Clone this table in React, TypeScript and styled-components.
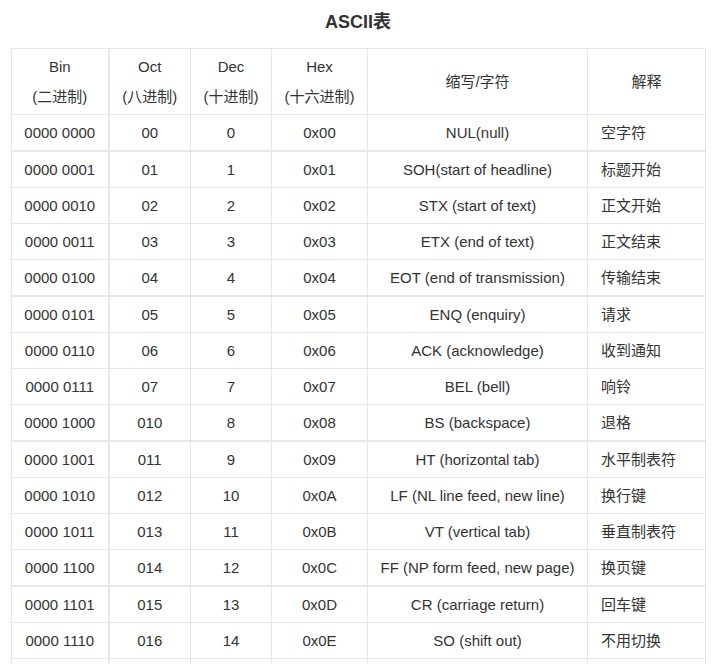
import React from "react";
import styled, { createGlobalStyle } from "styled-components";

const Global = createGlobalStyle`
  html, body { margin: 0; padding: 0; background: #fff; }
  body {
    font-family: "Liberation Sans", Arial, "Noto Sans CJK SC", sans-serif;
    color: #333;
  }
`;

const Page = styled.div`
  padding: 0 15px 0 11px;
`;

const Title = styled.h3`
  margin: 8px 0 12px;
  font-size: 18px;
  line-height: 28px;
  font-weight: bold;
  text-align: center;
  color: #333;
  font-family: "Liberation Sans", Arial, "Noto Sans CJK SC", sans-serif;
`;

const Table = styled.table`
  width: 694px;
  border-collapse: collapse;
  table-layout: fixed;
  font-size: 15px;
  line-height: 30px;
  color: #333;
`;

const Th = styled.th<{ $first?: boolean }>`
  font-weight: normal;
  text-align: center;
  padding: 2.6px 4px;
  border: 1px solid #e6e6e6;
  border-right-width: ${(p) => (p.$first ? "2px" : "1px")};
`;

const Td = styled.td<{ $left?: boolean; $first?: boolean; $thick?: boolean }>`
  text-align: ${(p) => (p.$left ? "left" : "center")};
  padding: 2.5px ${(p) => (p.$left ? "13px" : "4px")};
  border: 1px solid #e6e6e6;
  border-right-width: ${(p) => (p.$first ? "2px" : "1px")};
  border-bottom-width: ${(p) => (p.$thick ? "2px" : "1px")};
  white-space: nowrap;
`;

const rows: [string, string, string, string, string, string][] = [
  ["0000 0000", "00", "0", "0x00", "NUL(null)", "空字符"],
  ["0000 0001", "01", "1", "0x01", "SOH(start of headline)", "标题开始"],
  ["0000 0010", "02", "2", "0x02", "STX (start of text)", "正文开始"],
  ["0000 0011", "03", "3", "0x03", "ETX (end of text)", "正文结束"],
  ["0000 0100", "04", "4", "0x04", "EOT (end of transmission)", "传输结束"],
  ["0000 0101", "05", "5", "0x05", "ENQ (enquiry)", "请求"],
  ["0000 0110", "06", "6", "0x06", "ACK (acknowledge)", "收到通知"],
  ["0000 0111", "07", "7", "0x07", "BEL (bell)", "响铃"],
  ["0000 1000", "010", "8", "0x08", "BS (backspace)", "退格"],
  ["0000 1001", "011", "9", "0x09", "HT (horizontal tab)", "水平制表符"],
  ["0000 1010", "012", "10", "0x0A", "LF (NL line feed, new line)", "换行键"],
  ["0000 1011", "013", "11", "0x0B", "VT (vertical tab)", "垂直制表符"],
  ["0000 1100", "014", "12", "0x0C", "FF (NP form feed, new page)", "换页键"],
  ["0000 1101", "015", "13", "0x0D", "CR (carriage return)", "回车键"],
  ["0000 1110", "016", "14", "0x0E", "SO (shift out)", "不用切换"],
  ["0000 1111", "017", "15", "0x0F", "SI (shift in)", "启用切换"],
  ["0001 0000", "020", "16", "0x10", "DLE (data link escape)", "数据链路转义"],
];

const widths = [97, 82, 81, 96, 220, 118];

export default function App() {
  return (
    <>
      <Global />
      <Page>
        <Title>ASCII表</Title>
        <Table>
          <colgroup>
            {widths.map((w, i) => (
              <col key={i} style={{ width: w }} />
            ))}
          </colgroup>
          <thead>
            <tr>
              <Th $first>
                Bin
                <br />
                (二进制)
              </Th>
              <Th>
                Oct
                <br />
                (八进制)
              </Th>
              <Th>
                Dec
                <br />
                (十进制)
              </Th>
              <Th>
                Hex
                <br />
                (十六进制)
              </Th>
              <Th>缩写/字符</Th>
              <Th>解释</Th>
            </tr>
          </thead>
          <tbody>
            {rows.map((r, i) => {
              const thick = i % 4 === 0;
              return (
                <tr key={i}>
                  <Td $first $thick={thick}>{r[0]}</Td>
                  <Td $thick={thick}>{r[1]}</Td>
                  <Td $thick={thick}>{r[2]}</Td>
                  <Td $thick={thick}>{r[3]}</Td>
                  <Td $thick={thick}>{r[4]}</Td>
                  <Td $left $thick={thick}>{r[5]}</Td>
                </tr>
              );
            })}
          </tbody>
        </Table>
      </Page>
    </>
  );
}
